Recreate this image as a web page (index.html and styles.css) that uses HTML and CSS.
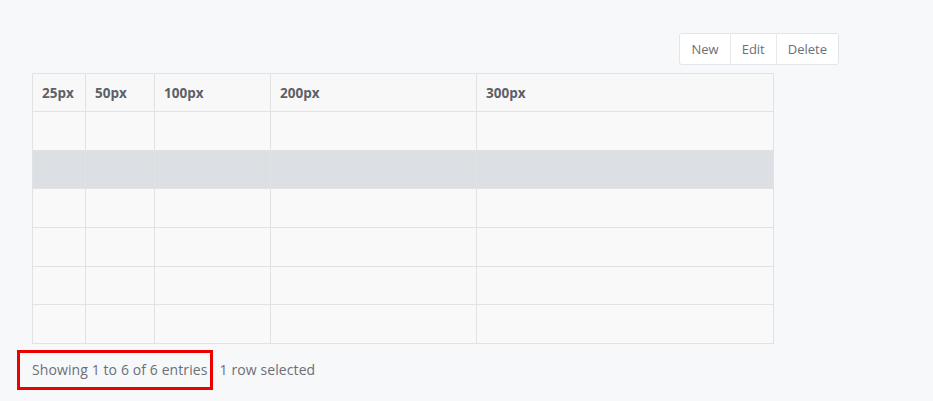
FILE: index.html
```html
<!DOCTYPE html>
<html>
<head>
<meta charset="utf-8">
<link rel="stylesheet" href="styles.css">
</head>
<body>
<div class="page">
  <div class="toolbar">
    <div class="btn-group">
      <button class="btn">New</button>
      <button class="btn">Edit</button>
      <button class="btn">Delete</button>
    </div>
  </div>
  <table class="grid">
    <colgroup>
      <col class="c25"><col class="c50"><col class="c100"><col class="c200"><col class="c300">
    </colgroup>
    <thead>
      <tr>
        <th>25px</th>
        <th>50px</th>
        <th>100px</th>
        <th>200px</th>
        <th>300px</th>
      </tr>
    </thead>
    <tbody>
      <tr><td></td><td></td><td></td><td></td><td></td></tr>
      <tr class="selected"><td></td><td></td><td></td><td></td><td></td></tr>
      <tr><td></td><td></td><td></td><td></td><td></td></tr>
      <tr><td></td><td></td><td></td><td></td><td></td></tr>
      <tr><td></td><td></td><td></td><td></td><td></td></tr>
      <tr><td></td><td></td><td></td><td></td><td></td></tr>
    </tbody>
  </table>
  <div class="info">
    <span class="info-count">Showing 1 to 6 of 6 entries<span class="highlight"></span></span>
    <span class="info-select">1 row selected</span>
  </div>
</div>
</body>
</html>
```
FILE: styles.css
```css
html, body {
  margin: 0;
  padding: 0;
  background: #f7f8fa;
  font-family: "Open Sans", "Liberation Sans", sans-serif;
  color: #6b6f76;
}
.page {
  width: 807px;
  padding: 33px 0 20px 32px;
}
.toolbar {
  display: flex;
  justify-content: flex-end;
  margin-bottom: 8px;
}
.btn-group {
  display: flex;
  background: #fff;
  border: 1px solid #e3e5e8;
  border-radius: 3px;
}
.btn {
  font-family: inherit;
  font-size: 13px;
  color: #6b6f76;
  background: #fff;
  border: 0;
  border-left: 1px solid #e8e9eb;
  height: 30px;
  padding: 0 11px;
  margin: 0;
}
.btn:first-child {
  border-left: 0;
  border-radius: 3px 0 0 3px;
}
.btn:last-child { border-radius: 0 3px 3px 0; }
.grid {
  border-collapse: collapse;
  width: 741px;
  table-layout: fixed;
  background: #f9f9f9;
}
.grid th, .grid td {
  box-sizing: border-box;
  border: 1px solid #e2e2e2;
  padding: 0 0 0 9px;
  text-align: left;
}
.grid th {
  height: 38px;
  font-size: 13.5px;
  font-weight: 700;
  color: #5c6068;
  background: #f8f8f9;
}
.grid td { height: 38.67px; }
.grid tr.selected td { background: #dcdfe4; }
.c25 { width: 53px; }
.c50 { width: 69px; }
.c100 { width: 116px; }
.c200 { width: 206px; }
.c300 { width: 297px; }
.info {
  display: flex;
  gap: 12px;
  margin-top: 16px;
  font-size: 14px;
  letter-spacing: 0.1px;
  color: #6b6f76;
  line-height: 20px;
}
.info-count {
  display: block;
  position: relative;
}
.highlight {
  position: absolute;
  left: -15px;
  right: -5px;
  top: -10px;
  bottom: -10px;
  border: 3px solid #ee0000;
}
```
